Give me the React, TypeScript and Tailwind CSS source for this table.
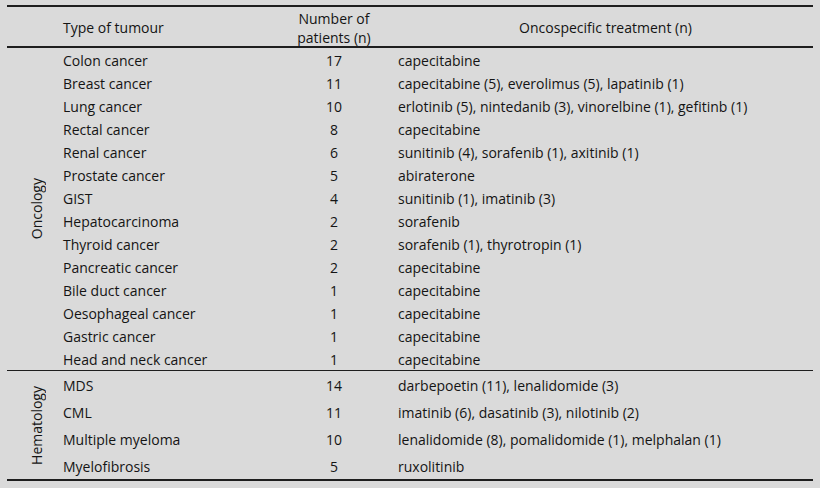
const oncology: [string, string, string][] = [
  ['Colon cancer', '17', 'capecitabine'],
  ['Breast cancer', '11', 'capecitabine (5), everolimus (5), lapatinib (1)'],
  ['Lung cancer', '10', 'erlotinib (5), nintedanib (3), vinorelbine (1), gefitinb (1)'],
  ['Rectal cancer', '8', 'capecitabine'],
  ['Renal cancer', '6', 'sunitinib (4), sorafenib (1), axitinib (1)'],
  ['Prostate cancer', '5', 'abiraterone'],
  ['GIST', '4', 'sunitinib (1), imatinib (3)'],
  ['Hepatocarcinoma', '2', 'sorafenib'],
  ['Thyroid cancer', '2', 'sorafenib (1), thyrotropin (1)'],
  ['Pancreatic cancer', '2', 'capecitabine'],
  ['Bile duct cancer', '1', 'capecitabine'],
  ['Oesophageal cancer', '1', 'capecitabine'],
  ['Gastric cancer', '1', 'capecitabine'],
  ['Head and neck cancer', '1', 'capecitabine'],
];

const hematology: [string, string, string][] = [
  ['MDS', '14', 'darbepoetin (11), lenalidomide (3)'],
  ['CML', '11', 'imatinib (6), dasatinib (3), nilotinib (2)'],
  ['Multiple myeloma', '10', 'lenalidomide (8), pomalidomide (1), melphalan (1)'],
  ['Myelofibrosis', '5', 'ruxolitinib'],
];

const Row = ({ row, tall }: { row: [string, string, string]; tall?: boolean }) => (
  <div className={`grid grid-cols-[235px_88px_1fr] items-center pt-[2px] ${tall ? 'h-[27px]' : 'h-[23px]'}`}>
    <div className="pl-2">{row[0]}</div>
    <div className="text-center">{row[1]}</div>
    <div className="pl-5">{row[2]}</div>
  </div>
);

const Group = ({ label, rows, tall }: { label: string; rows: [string, string, string][]; tall?: boolean }) => (
  <div className="flex">
    <div className="w-[48px] pl-3 flex items-center justify-center">
      <span className="[writing-mode:vertical-rl] rotate-180 leading-none">{label}</span>
    </div>
    <div className="flex-1">
      {rows.map((r) => (
        <Row key={r[0]} row={r} tall={tall} />
      ))}
    </div>
  </div>
);

export default function App() {
  return (
    <div className="w-[820px] h-[488px] bg-[#dadada] pt-[5px] px-[7px] text-[14px] text-[#141414] font-['Open_Sans',sans-serif]">
      <div className="border-t-2 border-b-2 border-[#1e1e1e]">
        {/* Header */}
        <div className="flex h-[41px] pt-[2px] border-b-2 border-[#1e1e1e] items-center">
          <div className="w-[48px]" />
          <div className="flex-1 grid grid-cols-[235px_88px_1fr] items-center">
            <div className="pl-2">Type of tumour</div>
            <div className="text-center leading-[19px]">
              Number of
              <br />
              patients (n)
            </div>
            <div className="pl-5 text-center">Oncospecific treatment (n)</div>
          </div>
        </div>

        <Group label="Oncology" rows={oncology} />
        <div className="border-t border-[#1e1e1e]">
          <Group label="Hematology" rows={hematology} tall />
        </div>
      </div>
    </div>
  );
}
